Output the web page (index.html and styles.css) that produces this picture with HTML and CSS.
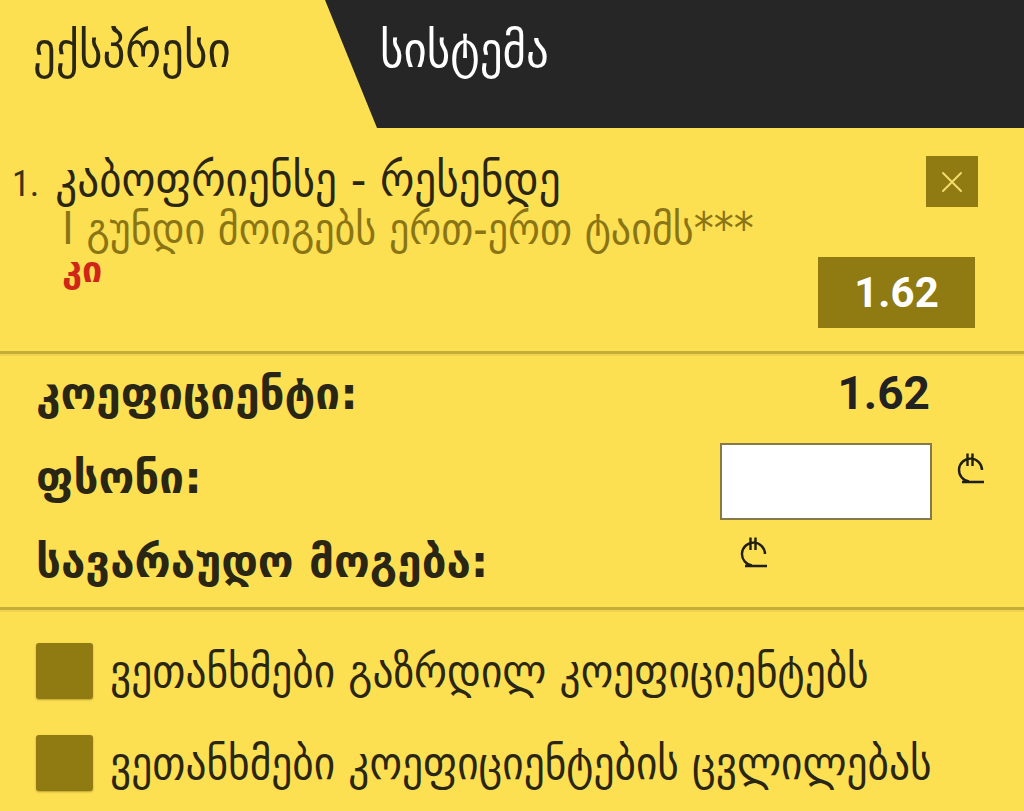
FILE: index.html
```html
<!DOCTYPE html>
<html lang="ka">
<head>
<meta charset="utf-8">
<title>ბილეთი</title>
<link rel="stylesheet" href="styles.css">
</head>
<body>
<div class="slip">
  <div class="tabs">
    <div class="tab tab-express">ექსპრესი</div>
    <div class="tab tab-system">სისტემა</div>
  </div>

  <div class="bet">
    <div class="bet-info">
      <div class="bet-title"><span class="bet-num">1.</span><span>კაბოფრიენსე - რესენდე</span></div>
      <div class="bet-market">I გუნდი მოიგებს ერთ-ერთ ტაიმს***</div>
      <div class="bet-pick">კი</div>
    </div>
    <div class="bet-side">
      <button class="close-btn" aria-label="close">
        <svg width="24" height="24" viewBox="0 0 24 24"><path d="M3 3 L21 21 M21 3 L3 21" stroke="#f3dc6a" stroke-width="2" stroke-linecap="round"/></svg>
      </button>
      <div class="odds-box">1.62</div>
    </div>
  </div>

  <div class="summary">
    <div class="row">
      <div class="row-label">კოეფიციენტი:</div>
      <div class="row-value coef">1.62</div>
      <div class="row-cur"></div>
    </div>
    <div class="row">
      <div class="row-label">ფსონი:</div>
      <div class="row-value"><div class="stake-input"></div></div>
      <div class="row-cur">
        <svg class="lari" width="32" height="34" viewBox="0 0 32 34"><path d="M27 19 A11.5 11.5 0 1 0 14 30.5 M7 31 H29 M12.5 2.5 V15 M17.5 2.5 V15" fill="none" stroke="#1e1e12" stroke-width="2.4"/></svg>
      </div>
    </div>
    <div class="row">
      <div class="row-label">სავარაუდო მოგება:</div>
      <div class="row-value win">
        <svg class="lari" width="32" height="34" viewBox="0 0 32 34"><path d="M27 19 A11.5 11.5 0 1 0 14 30.5 M7 31 H29 M12.5 2.5 V15 M17.5 2.5 V15" fill="none" stroke="#1e1e12" stroke-width="2.4"/></svg>
      </div>
      <div class="row-cur"></div>
    </div>
  </div>

  <div class="options">
    <label class="opt"><span class="box"></span><span>ვეთანხმები გაზრდილ კოეფიციენტებს</span></label>
    <label class="opt"><span class="box"></span><span>ვეთანხმები კოეფიციენტების ცვლილებას</span></label>
  </div>
</div>
</body>
</html>
```

FILE: styles.css
```css
* { box-sizing: border-box; }
html, body { margin: 0; padding: 0; }
body {
  background: #fddf52;
  font-family: Roboto, "DejaVu Sans", sans-serif;
  color: #2a2614;
  width: 1024px;
  height: 811px;
  overflow: hidden;
}
.slip { display: flex; flex-direction: column; }

.tabs { display: flex; height: 128px; }
.tab {
  font-family: "DejaVu Sans", sans-serif;
  font-stretch: condensed;
  font-size: 50px;
  line-height: 56px;
  padding-top: 22px;
}
.tab-express { width: 325px; padding-left: 33px; color: #2a2614; }
.tab-system {
  flex: 1;
  background: #262626;
  color: #ffffff;
  padding-left: 55px;
  clip-path: polygon(0 0, 100% 0, 100% 100%, 52px 100%);
}

.bet {
  display: flex;
  justify-content: space-between;
  padding: 28px 46px 0 12px;
  height: 223px;
}
.bet-title {
  font-family: "DejaVu Sans", sans-serif;
  font-stretch: condensed;
  font-size: 48px;
  line-height: 46px;
  color: #2a2614;
  display: flex;
  align-items: baseline;
  gap: 16px;
}
.bet-num { font-family: Roboto, sans-serif; font-weight: 400; font-size: 36px; color: #3a3418; }
.bet-market {
  font-family: "DejaVu Sans", sans-serif;
  font-stretch: condensed;
  font-size: 44.5px;
  line-height: 44px;
  color: #8a7516;
  padding-left: 50px;
}
.bet-pick {
  font-family: "DejaVu Sans", sans-serif;
  font-weight: bold;
  font-size: 36px;
  line-height: 38px;
  color: #d0261a;
  padding-left: 50px;
}
.bet-side { display: flex; flex-direction: column; align-items: flex-end; }
.close-btn {
  width: 52px; height: 51px;
  background: #8f7b12;
  border: 0; padding: 0;
  display: flex; align-items: center; justify-content: center;
}
.odds-box {
  margin-top: 50px;
  margin-right: 3px;
  width: 157px; height: 71px;
  background: #8f7b12;
  color: #ffffff;
  font-family: Roboto, sans-serif;
  font-weight: bold;
  font-size: 42px;
  display: flex; align-items: center; justify-content: center;
}

.summary {
  border-top: 3px solid #c6ac3a;
  box-shadow: inset 0 2px 0 #f0d24c;
  padding: 0 0 0 36px;
  height: 256px;
}
.row {
  display: grid;
  grid-template-columns: 1fr 212px 92px;
  align-items: center;
  height: 84px;
}
.row:first-child { margin-top: -3px; }
.row-label {
  font-family: "DejaVu Sans", sans-serif;
  font-weight: bold;
  font-size: 44px;
  color: #2a2614;
}
.row-value.coef {
  text-align: right;
  font-family: Roboto, sans-serif;
  font-weight: bold;
  font-size: 46px;
  color: #222222;
  padding-right: 2px;
}
.stake-input {
  width: 212px; height: 77px;
  margin-top: 8px;
  background: #ffffff;
  border: 2px solid #86794a;
}
.row-cur { padding-left: 23px; padding-bottom: 20px; }
.row-value.win { padding-left: 18px; padding-bottom: 18px; }
.lari { display: block; }

.options {
  border-top: 3px solid #c6ac3a;
  box-shadow: inset 0 2px 0 #f0d24c;
  padding: 33px 0 0 36px;
  display: flex;
  flex-direction: column;
  gap: 36px;
}
.opt {
  display: flex;
  align-items: center;
  gap: 17px;
  font-family: "DejaVu Sans", sans-serif;
  font-stretch: condensed;
  font-size: 46px;
  color: #2a2614;
}
.box {
  width: 57px; height: 56px;
  background: #8f7b12;
  border-radius: 3px;
  box-shadow: 0 1px 2px rgba(90, 70, 0, 0.4);
  flex-shrink: 0;
}
```
